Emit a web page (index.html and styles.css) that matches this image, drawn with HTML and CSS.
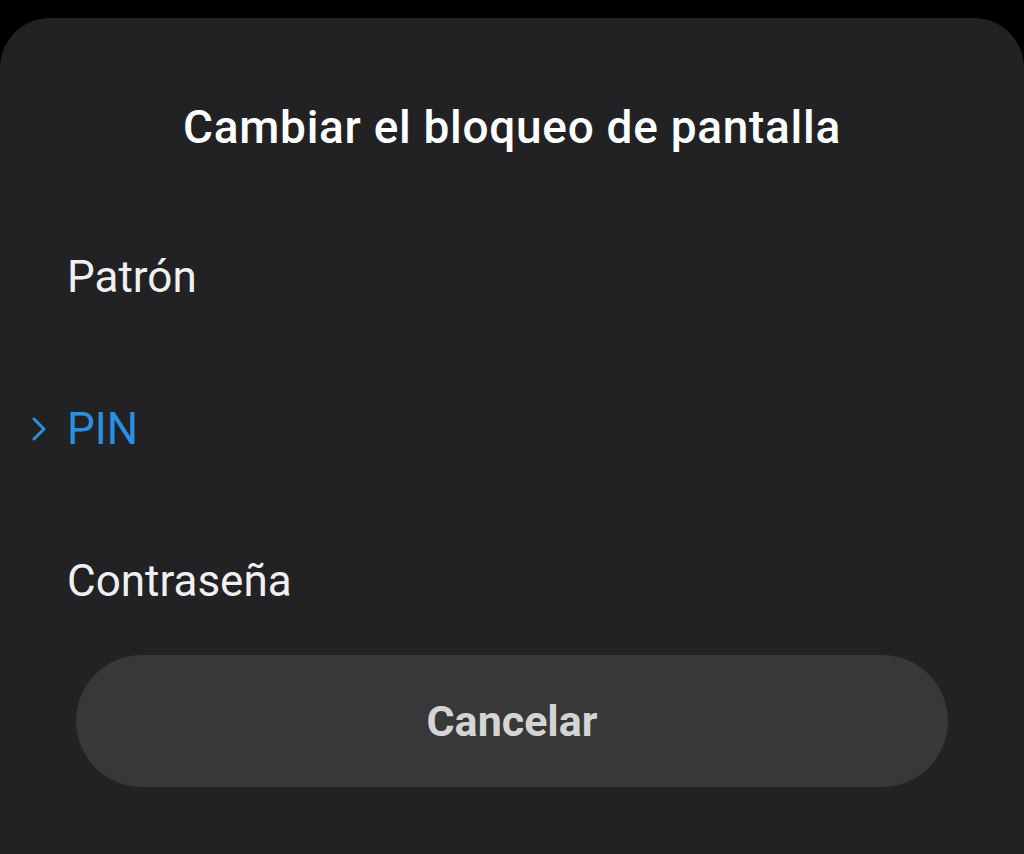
FILE: index.html
```html
<!DOCTYPE html>
<html lang="es">
<head>
    <title>Cambiar el bloqueo de pantalla</title>
    <link rel="stylesheet" href="styles.css">
</head>
<body>
    <div class="sheet">
        <h1 class="sheet-title">Cambiar el bloqueo de pantalla</h1>

        <ul class="lock-list">
            <li class="lock-item">
                <span class="marker"></span>
                <span>Patrón</span>
            </li>
            <li class="lock-item selected">
                <span class="marker">
                    <svg width="14" height="24" viewBox="0 0 14 24">
                        <polyline points="2,2 12,12 2,22" fill="none" stroke="#2a90e2" stroke-width="3" stroke-linecap="round" stroke-linejoin="round"/>
                    </svg>
                </span>
                <span>PIN</span>
            </li>
            <li class="lock-item">
                <span class="marker"></span>
                <span>Contraseña</span>
            </li>
        </ul>

        <div class="bottom-container">
            <button class="btn-cancel" type="button">Cancelar</button>
        </div>
    </div>
</body>
</html>
```

FILE: styles.css
```css
/* dialog de bloqueo */
body {
    margin: 0;
    background-color: #000;
    font-family: Roboto, "Noto Sans", sans-serif;
    height: 854px;
    overflow: hidden;
}

.sheet {
    margin-top: 18px;
    height: 836px;
    background-color: #222224;
    border-radius: 50px 50px 0 0;
    padding-top: 84px;
    box-sizing: border-box;
}

.sheet-title {
    margin: 0;
    text-align: center;
    color: #fff;
    font-size: 46px;
    line-height: 50px;
    font-weight: 500;
    letter-spacing: 0.7px;
}

.lock-list {
    list-style: none;
    margin: 95px 0 0 0;
    padding: 0;
    display: flex;
    flex-direction: column;
    gap: 92px;
}

.lock-item {
    display: flex;
    align-items: center;
    height: 60px;
    padding-left: 32px;
    color: #f0f0f0;
    font-size: 44px;
}

.marker {
    width: 35px;
    display: flex;
    align-items: center;
}

.lock-item.selected {
    color: #2a90e2;
}

.bottom-container {
    margin: 44px 76px 0 76px;
}

.btn-cancel {
    width: 100%;
    height: 132px;
    border: none;
    border-radius: 66px;
    background-color: #383838;
    color: #d4d4d4;
    font-family: Roboto, "Noto Sans", sans-serif;
    font-size: 43px;
    font-weight: 700;
    cursor: pointer;
}
```
